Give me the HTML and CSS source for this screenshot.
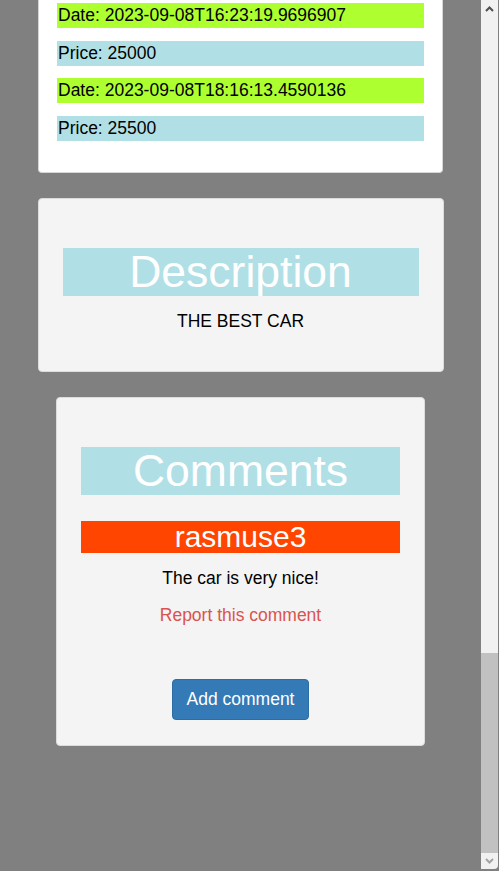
FILE: index.html
```html
<!DOCTYPE html>
<html lang="en">
<head>
<meta charset="utf-8">
<title>Car details</title>
<link rel="stylesheet" href="styles.css">
</head>
<body>
<div class="viewport">
  <main class="page">
    <section class="card history">
      <p class="row date">Date: 2023-09-08T16:23:19.9696907</p>
      <p class="row price">Price: 25000</p>
      <p class="row date">Date: 2023-09-08T18:16:13.4590136</p>
      <p class="row price">Price: 25500</p>
    </section>
    <section class="card well description">
      <h2 class="bar-title">Description</h2>
      <p class="text">THE BEST CAR</p>
    </section>
    <section class="card well comments">
      <h2 class="bar-title">Comments</h2>
      <h3 class="user">rasmuse3</h3>
      <p class="text comment-text">The car is very nice!</p>
      <a class="report" href="#">Report this comment</a>
      <button class="btn" type="button">Add comment</button>
    </section>
  </main>
  <div class="scrollbar">
    <div class="sb-btn up">
      <svg width="9" height="6" viewBox="0 0 9 6"><path d="M1 5 L4.5 1.5 L8 5" fill="none" stroke="#505050" stroke-width="2"/></svg>
    </div>
    <div class="sb-track">
      <div class="sb-thumb"></div>
    </div>
    <div class="sb-btn down">
      <svg width="9" height="6" viewBox="0 0 9 6"><path d="M1 1 L4.5 4.5 L8 1" fill="none" stroke="#a3a3a3" stroke-width="2"/></svg>
    </div>
  </div>
</div>
</body>
</html>
```

FILE: styles.css
```css
html, body {
  margin: 0;
  padding: 0;
  height: 871px;
  overflow: hidden;
  background: #808080;
  font-family: "Liberation Sans", Arial, sans-serif;
  font-size: 17.5px;
  line-height: 25px;
  color: #000;
}

.viewport {
  display: flex;
  height: 871px;
}

.page {
  flex: 1;
  display: flex;
  flex-direction: column;
  align-items: center;
  gap: 25px;
}

.card {
  box-sizing: border-box;
  border: 1px solid #d6d6d6;
  border-radius: 4px;
  display: flex;
  flex-direction: column;
}

.history {
  width: 405px;
  background: #fff;
  border-top: none;
  border-radius: 0 0 4px 4px;
  padding: 3px 18px 31px;
  gap: 12.5px;
}

.row {
  margin: 0;
  padding-left: 1px;
}

.date { background: #adff2f; }
.price { background: #b0e0e6; }

.well {
  background: #f4f4f4;
  border-color: #dcdcdc;
  align-items: stretch;
  text-align: center;
}

.description {
  width: 406px;
  padding: 49px 24px 37px;
}

.comments {
  width: 369px;
  padding: 49px 24px 25px;
  align-items: center;
}

.comments > .bar-title,
.comments > .user {
  align-self: stretch;
}

.bar-title {
  margin: 0;
  background: #b0e0e6;
  color: #fff;
  font-weight: normal;
  font-size: 44.5px;
  line-height: 48px;
}

.text {
  margin: 13px 0 0;
}

.user {
  margin: 26px 0 0;
  background: #ff4500;
  color: #fff;
  font-weight: normal;
  font-size: 30px;
  line-height: 32px;
}

.report {
  margin-top: 12px;
  color: #d9534f;
  text-decoration: none;
}

.btn {
  margin-top: 51px;
  font-family: "Liberation Sans", Arial, sans-serif;
  font-size: 17.5px;
  line-height: 25px;
  padding: 7px 14px;
  color: #fff;
  background: #337ab7;
  border: 1px solid #2e6da4;
  border-radius: 4px;
}

.scrollbar {
  width: 17px;
  height: 869px;
  margin-right: 1px;
  background: #f1f1f1;
  display: flex;
  flex-direction: column;
  border-bottom-right-radius: 4px;
  overflow: hidden;
}

.sb-btn {
  height: 17px;
  flex: none;
  display: flex;
  align-items: center;
  justify-content: center;
}

.sb-btn.down { height: 16px; }

.sb-track {
  flex: 1;
  display: flex;
  flex-direction: column;
  justify-content: flex-end;
}

.sb-thumb {
  height: 200px;
  background: #c1c1c1;
}
```
